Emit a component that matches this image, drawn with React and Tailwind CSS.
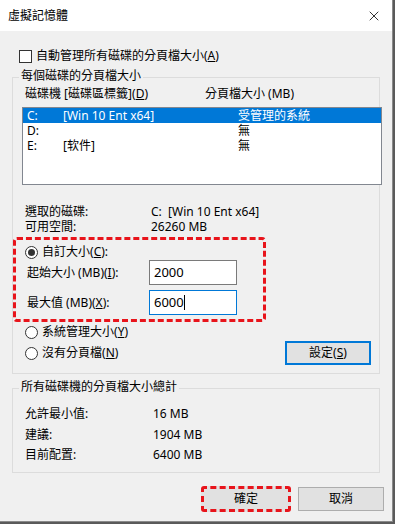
import { X } from "lucide-react";

const font = { fontFamily: '"Noto Sans", "Noto Sans CJK TC", sans-serif' };

const Radio = ({ checked, label, u, rest, h = "h-[20px]" }) => (
  <div className={`flex items-center ${h}`}>
    <span className="w-[13px] h-[13px] rounded-full border border-[#333] bg-white flex items-center justify-center">
      {checked && <span className="w-[7px] h-[7px] rounded-full bg-[#333]" />}
    </span>
    <span className="ml-[4px]">
      {label}(<span className="underline">{u}</span>){rest}
    </span>
  </div>
);

const App = () => {
  return (
    <div className="w-[395px] h-[524px] bg-[#5a5a5a] overflow-hidden text-[12px] leading-none text-black" style={font}>
      <div className="w-[393px] h-[522px] bg-[#f0f0f0] border-r border-b border-[#8a8a8a] flex flex-col">
        {/* title bar */}
        <div className="h-[31px] bg-white flex items-center justify-between pl-[8px] pr-[10px]">
          <span className="text-[12px]">虛擬記憶體</span>
          <X size={16} strokeWidth={1.2} />
        </div>

        <div className="px-[12px] pt-[18px]">
          <div className="flex items-center pl-[7px] h-[14px]">
            <span className="w-[13px] h-[13px] border border-[#333] bg-white" />
            <span className="ml-[4px]">
              自動管理所有磁碟的分頁檔大小(<span className="underline">A</span>)
            </span>
          </div>

          {/* group 1 */}
          <div className="relative mt-[14px] h-[297px] w-[368px] border border-[#dcdcdc]">
            <span className="absolute -top-[8px] left-[6px] bg-[#f0f0f0] px-[2px]">每個磁碟的分頁檔大小</span>
            <div className="flex pt-[10px] pl-[12px] h-[29px]">
              <span className="w-[180px]">
                磁碟機 [磁碟區標籤](<span className="underline">D</span>)
              </span>
              <span>分頁檔大小 (MB)</span>
            </div>
            <div className="ml-[9px] w-[360px] h-[78px] border border-[#828790] bg-white leading-[15px]">
              <div className="flex items-center h-[15px] bg-[#0078d7] text-white px-[4px]">
                <span className="w-[36px]">C:</span>
                <span className="w-[175px]">[Win 10 Ent x64]</span>
                <span>受管理的系統</span>
              </div>
              <div className="flex items-center h-[15px] px-[4px]">
                <span className="w-[36px]">D:</span>
                <span className="w-[175px]"></span>
                <span>無</span>
              </div>
              <div className="flex items-center h-[15px] px-[4px]">
                <span className="w-[36px]">E:</span>
                <span className="w-[175px]">[软件]</span>
                <span>無</span>
              </div>
            </div>

            <div className="pl-[12px] mt-[19px] flex flex-col leading-[15px]">
              <div className="flex h-[15px] items-center">
                <span className="w-[126px]">選取的磁碟:</span>
                <span>C:&nbsp;&nbsp;[Win 10 Ent x64]</span>
              </div>
              <div className="flex h-[15px] items-center">
                <span className="w-[126px]">可用空間:</span>
                <span>26260 MB</span>
              </div>
            </div>

            {/* custom size area */}
            <div className="mt-[3px] w-[253px] h-[85px] border-[3px] border-dashed border-[#e8141b] rounded-[4px] pl-[9px] pt-[5px]">
              <Radio checked label="自訂大小" u="C" rest=":" h="h-[14px]" />
              <div className="flex items-center mt-[1px] h-[25px]">
                <span className="w-[124px] pl-[2px]">
                  起始大小 (MB)(<span className="underline">I</span>):
                </span>
                <div className="w-[88px] h-[25px] border border-[#7a7a7a] bg-white flex items-center pl-[4px] text-[13px]">2000</div>
              </div>
              <div className="flex items-center mt-[5px] h-[25px]">
                <span className="w-[124px] pl-[2px]">
                  最大值 (MB)(<span className="underline">X</span>):
                </span>
                <div className="w-[88px] h-[25px] border border-[#0078d7] bg-white flex items-center pl-[4px] text-[13px]">
                  6000<span className="w-px h-[15px] bg-black" />
                </div>
              </div>
            </div>

            <div className="flex items-end pl-[12px] mt-[0px]">
              <div className="flex flex-col">
                <Radio label="系統管理大小" u="Y" rest="" />
                <div className="h-[1px]" />
                <Radio label="沒有分頁檔" u="N" rest="" />
              </div>
              <button className="ml-auto mr-[8px] mb-[-2px] w-[86px] h-[24px] border-2 border-[#0078d7] bg-[#e1e1e1] flex items-center justify-center">
                設定(<span className="underline">S</span>)
              </button>
            </div>
          </div>

          {/* group 2 */}
          <div className="relative mt-[14px] h-[85px] w-[368px] border border-[#dcdcdc]">
            <span className="absolute -top-[8px] left-[6px] bg-[#f0f0f0] px-[2px]">所有磁碟機的分頁檔大小總計</span>
            <div className="pl-[12px] pt-[15px] flex flex-col leading-[20px]">
              <div className="flex h-[20px] items-center">
                <span className="w-[128px]">允許最小值:</span>
                <span>16 MB</span>
              </div>
              <div className="flex h-[21px] items-center">
                <span className="w-[128px]">建議:</span>
                <span>1904 MB</span>
              </div>
              <div className="flex h-[20px] items-center">
                <span className="w-[128px]">目前配置:</span>
                <span>6400 MB</span>
              </div>
            </div>
          </div>

          <div className="flex justify-end gap-[7px] mt-[13px] mr-[-4px]">
            <button className="w-[90px] h-[26px] border-[3px] border-dashed border-[#e8141b] rounded-[3px] bg-[#e1e1e1] flex items-center justify-center">
              確定
            </button>
            <button className="w-[86px] h-[24px] mt-[1px] border border-[#adadad] bg-[#e1e1e1] flex items-center justify-center">
              取消
            </button>
          </div>
        </div>
      </div>
    </div>
  );
};

export default App;
